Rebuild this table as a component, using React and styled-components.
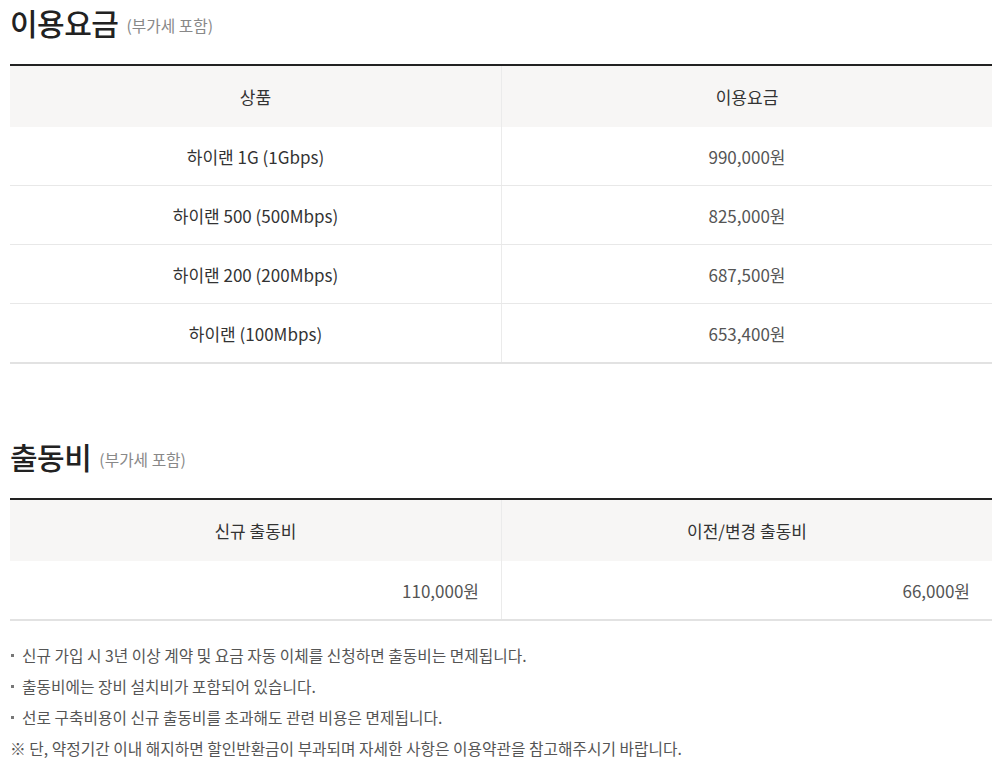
import styled, { createGlobalStyle } from "styled-components";

const GlobalStyle = createGlobalStyle`
  body {
    margin: 0;
    background: #fff;
    font-family: "Noto Sans CJK KR", "Noto Sans", sans-serif;
    color: #333;
  }
`;

const Page = styled.div`
  width: 982px;
  padding: 0 8px 0 10px;
`;

const Section = styled.section`
  margin-bottom: ${(p) => p.$gap || 0}px;
`;

const Title = styled.h2`
  margin: 0;
  height: 64px;
  display: flex;
  align-items: flex-start;
  padding-top: 1px;
  box-sizing: border-box;
  font-size: 30px;
  font-weight: 500;
  letter-spacing: -0.5px;
  color: #222;
  line-height: 42px;
`;

const Sub = styled.span`
  font-size: 15.75px;
  font-weight: 400;
  color: #888;
  margin-left: 8px;
  line-height: 42px;
  padding-top: 4px;
  letter-spacing: 0;
`;

const TableWrap = styled.div`
  border-top: 2px solid #222;
  border-bottom: 2px solid #e2e2e2;
`;

const Row = styled.div`
  display: grid;
  grid-template-columns: 492px 1fr;
  box-sizing: border-box;
  height: ${(p) => (p.$head ? 61 : 59)}px;
  background: ${(p) => (p.$head ? "#f7f6f5" : "#fff")};
  border-bottom: ${(p) => (p.$head ? "0" : "1px solid #e8e8e8")};
  &:last-child {
    border-bottom: 0;
    height: 58px;
  }
`;

const Cell = styled.div`
  display: flex;
  align-items: center;
  justify-content: ${(p) => (p.$right ? "flex-end" : "center")};
  padding: 0 22px;
  font-size: 17px;
  color: ${(p) => (p.$price ? "#555" : "#333")};
  &:first-child {
    border-right: 1px solid #ebebeb;
  }
`;

const Notes = styled.ul`
  list-style: none;
  margin: 19px 0 0;
  padding: 0;
`;

const Note = styled.li`
  position: relative;
  font-size: 15.75px;
  color: #555;
  line-height: 31px;
  padding-left: ${(p) => (p.$mark ? "0" : "12px")};
  &::before {
    content: ${(p) => (p.$mark ? "none" : '""')};
    position: absolute;
    left: 1px;
    top: 14px;
    width: 3px;
    height: 3px;
    background: #777;
  }
`;

const fees = [
  ["하이랜 1G (1Gbps)", "990,000원"],
  ["하이랜 500 (500Mbps)", "825,000원"],
  ["하이랜 200 (200Mbps)", "687,500원"],
  ["하이랜 (100Mbps)", "653,400원"],
];

export default function App() {
  return (
    <Page>
      <GlobalStyle />
      <Section $gap={70}>
        <Title>
          이용요금<Sub>(부가세 포함)</Sub>
        </Title>
        <TableWrap>
          <Row $head>
            <Cell>상품</Cell>
            <Cell>이용요금</Cell>
          </Row>
          {fees.map(([name, price]) => (
            <Row key={name}>
              <Cell>{name}</Cell>
              <Cell $price>{price}</Cell>
            </Row>
          ))}
        </TableWrap>
      </Section>
      <Section>
        <Title>
          출동비<Sub>(부가세 포함)</Sub>
        </Title>
        <TableWrap>
          <Row $head>
            <Cell>신규 출동비</Cell>
            <Cell>이전/변경 출동비</Cell>
          </Row>
          <Row>
            <Cell $right $price>110,000원</Cell>
            <Cell $right $price>66,000원</Cell>
          </Row>
        </TableWrap>
        <Notes>
          <Note>신규 가입 시 3년 이상 계약 및 요금 자동 이체를 신청하면 출동비는 면제됩니다.</Note>
          <Note>출동비에는 장비 설치비가 포함되어 있습니다.</Note>
          <Note>선로 구축비용이 신규 출동비를 초과해도 관련 비용은 면제됩니다.</Note>
          <Note $mark>※ 단, 약정기간 이내 해지하면 할인반환금이 부과되며 자세한 사항은 이용약관을 참고해주시기 바랍니다.</Note>
        </Notes>
      </Section>
    </Page>
  );
}
